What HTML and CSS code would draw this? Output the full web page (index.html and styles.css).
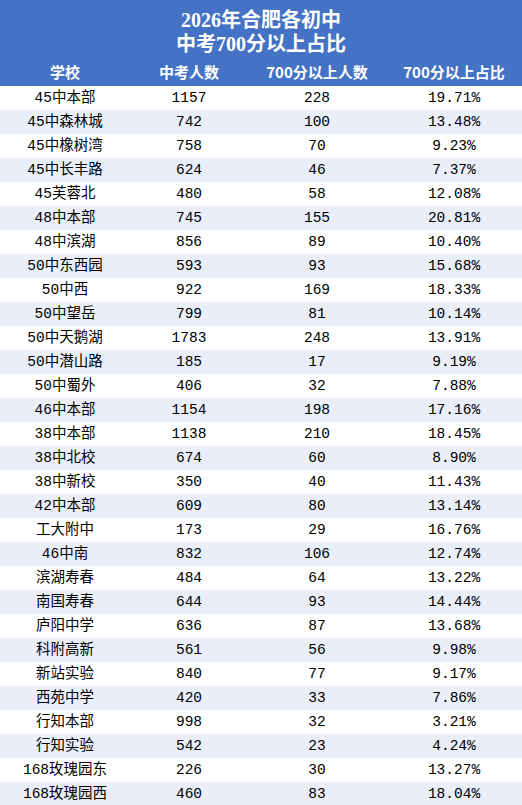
FILE: index.html
```html
<!DOCTYPE html>
<html lang="zh-CN">
<head>
<meta charset="utf-8">
<title>2026年合肥各初中中考700分以上占比</title>
<link rel="stylesheet" href="styles.css">
</head>
<body>
<div class="sheet">
  <div class="title">
    <div class="title-line">2026年合肥各初中</div>
    <div class="title-line">中考700分以上占比</div>
  </div>
  <table class="grid">
    <colgroup>
      <col class="c1"><col class="c2"><col class="c3"><col class="c4">
    </colgroup>
    <thead>
      <tr class="head"><th>学校</th><th>中考人数</th><th>700分以上人数</th><th>700分以上占比</th></tr>
    </thead>
    <tbody>
      <tr><td>45中本部</td><td>1157</td><td>228</td><td>19.71%</td></tr>
      <tr><td>45中森林城</td><td>742</td><td>100</td><td>13.48%</td></tr>
      <tr><td>45中橡树湾</td><td>758</td><td>70</td><td>9.23%</td></tr>
      <tr><td>45中长丰路</td><td>624</td><td>46</td><td>7.37%</td></tr>
      <tr><td>45芙蓉北</td><td>480</td><td>58</td><td>12.08%</td></tr>
      <tr><td>48中本部</td><td>745</td><td>155</td><td>20.81%</td></tr>
      <tr><td>48中滨湖</td><td>856</td><td>89</td><td>10.40%</td></tr>
      <tr><td>50中东西园</td><td>593</td><td>93</td><td>15.68%</td></tr>
      <tr><td>50中西</td><td>922</td><td>169</td><td>18.33%</td></tr>
      <tr><td>50中望岳</td><td>799</td><td>81</td><td>10.14%</td></tr>
      <tr><td>50中天鹅湖</td><td>1783</td><td>248</td><td>13.91%</td></tr>
      <tr><td>50中潜山路</td><td>185</td><td>17</td><td>9.19%</td></tr>
      <tr><td>50中蜀外</td><td>406</td><td>32</td><td>7.88%</td></tr>
      <tr><td>46中本部</td><td>1154</td><td>198</td><td>17.16%</td></tr>
      <tr><td>38中本部</td><td>1138</td><td>210</td><td>18.45%</td></tr>
      <tr><td>38中北校</td><td>674</td><td>60</td><td>8.90%</td></tr>
      <tr><td>38中新校</td><td>350</td><td>40</td><td>11.43%</td></tr>
      <tr><td>42中本部</td><td>609</td><td>80</td><td>13.14%</td></tr>
      <tr><td>工大附中</td><td>173</td><td>29</td><td>16.76%</td></tr>
      <tr><td>46中南</td><td>832</td><td>106</td><td>12.74%</td></tr>
      <tr><td>滨湖寿春</td><td>484</td><td>64</td><td>13.22%</td></tr>
      <tr><td>南国寿春</td><td>644</td><td>93</td><td>14.44%</td></tr>
      <tr><td>庐阳中学</td><td>636</td><td>87</td><td>13.68%</td></tr>
      <tr><td>科附高新</td><td>561</td><td>56</td><td>9.98%</td></tr>
      <tr><td>新站实验</td><td>840</td><td>77</td><td>9.17%</td></tr>
      <tr><td>西苑中学</td><td>420</td><td>33</td><td>7.86%</td></tr>
      <tr><td>行知本部</td><td>998</td><td>32</td><td>3.21%</td></tr>
      <tr><td>行知实验</td><td>542</td><td>23</td><td>4.24%</td></tr>
      <tr><td>168玫瑰园东</td><td>226</td><td>30</td><td>13.27%</td></tr>
      <tr><td>168玫瑰园西</td><td>460</td><td>83</td><td>18.04%</td></tr>
    </tbody>
  </table>
</div>
</body>
</html>
```
FILE: styles.css
```css
html, body {
  margin: 0;
  padding: 0;
  background: #ffffff;
}
.sheet {
  width: 522px;
  display: flex;
  flex-direction: column;
}
.title {
  background: #4472c4;
  color: #ffffff;
  height: 60px;
  box-sizing: border-box;
  padding-top: 8px;
  font-family: "Liberation Serif", "Noto Sans CJK SC", serif;
  font-weight: bold;
  font-size: 20px;
  line-height: 24px;
  text-align: center;
}
.grid {
  width: 522px;
  border-collapse: collapse;
  table-layout: fixed;
  border-bottom: 1px solid #4472c4;
}
.c1 { width: 130px; }
.c2 { width: 118px; }
.c3 { width: 138px; }
.c4 { width: 136px; }
.head th {
  background: #4472c4;
  color: #ffffff;
  height: 24px;
  padding: 0 0 2px 0;
  font-family: "Noto Sans CJK SC", sans-serif;
  font-weight: bold;
  font-size: 15px;
  line-height: 20px;
  text-align: center;
  vertical-align: middle;
}
.grid td {
  height: 24px;
  padding: 0;
  font-family: "Liberation Mono", "Noto Sans CJK SC", monospace;
  font-size: 14.5px;
  line-height: 24px;
  color: #000000;
  text-align: center;
  vertical-align: middle;
  white-space: nowrap;
}
.grid tbody tr:nth-child(even) td {
  background: #e9eef8;
}
```
